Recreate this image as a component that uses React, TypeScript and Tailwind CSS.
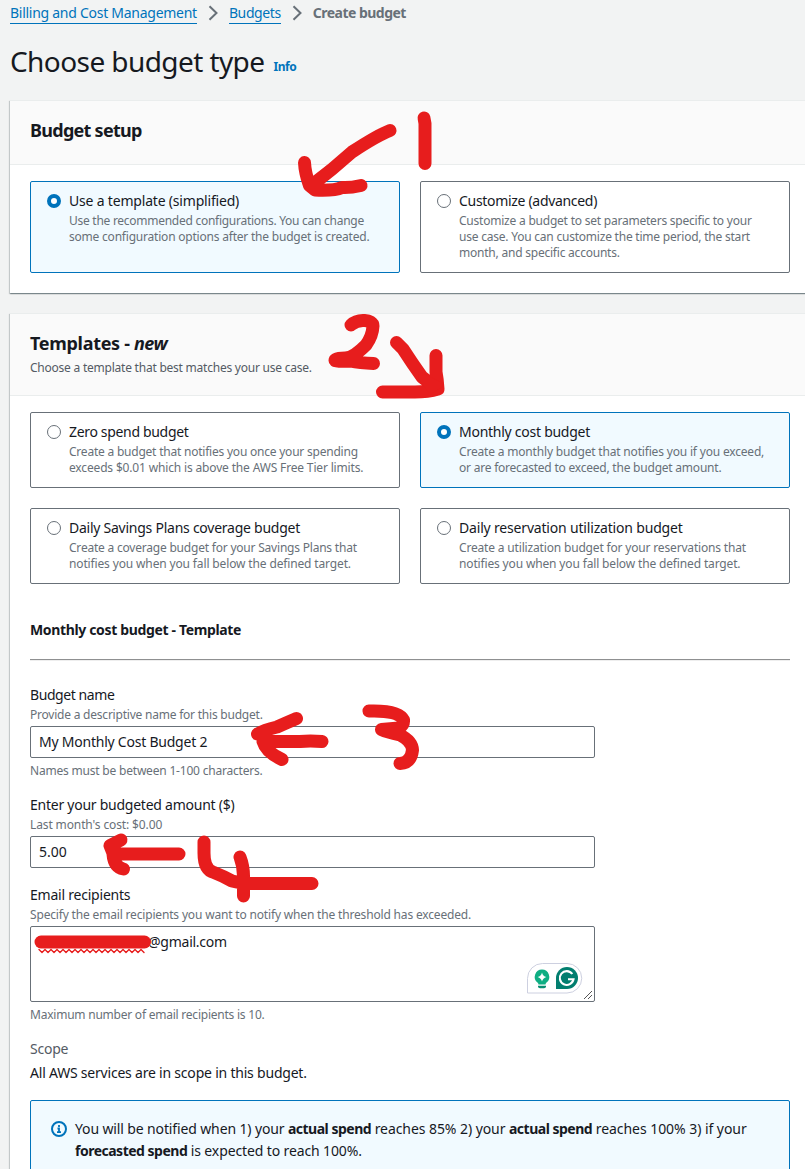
import React from 'react';

type TileProps = {
  title: string;
  titleClass: string;
  lines: { text: string; cls: string }[];
  selected?: boolean;
  tall?: boolean;
};

function Tile({ title, titleClass, lines, selected, tall }: TileProps) {
  return (
    <label
      className={`flex w-[370px] gap-2 rounded-[2px] border px-4 pt-2 ${tall ? 'h-[92px]' : 'h-[76px]'} ${
        selected ? 'border-[#0073bb] bg-[#f1faff]' : 'border-[#687078] bg-white'
      }`}
    >
      <span
        className={`mt-1 size-3.5 shrink-0 rounded-full bg-white ${
          selected ? 'border-4 border-[#0073bb]' : 'border border-[#687078]'
        }`}
      />
      <span className="block whitespace-nowrap">
        <span className={`mb-px block text-[14px] leading-[22px] ${titleClass}`}>{title}</span>
        {lines.map((l) => (
          <span key={l.text} className={`block text-[12px] leading-4 text-[#687078] ${l.cls}`}>
            {l.text}
          </span>
        ))}
      </span>
    </label>
  );
}

function Chevron() {
  return (
    <svg className="mx-[11px] h-4 w-[10px]" viewBox="0 0 10 16" fill="none" stroke="#687078" strokeWidth="2">
      <path d="M1.500 1.200 L8.500 8 L1.500 14.800" />
    </svg>
  );
}

const card =
  'w-[800px] border-t border-[#eaeded] bg-white shadow-[0_1px_1px_0_rgba(0,28,36,0.3),1px_1px_1px_0_rgba(0,28,36,0.15),-1px_1px_1px_0_rgba(0,28,36,0.15)]';
const hint = 'h-4 pt-px text-[12px] leading-4 text-[#687078]';
const field = 'mt-1 flex h-8 w-[565px] items-center rounded-[2px] border border-[#687078] bg-white px-2';

function AssistantBadge() {
  return (
    <svg className="absolute right-[11px] bottom-[7px]" width="56" height="31" viewBox="0 0 56 31">
      <path
        d="M15.5 .5 H40 A14.750 14.750 0 0 1 40 30 H.5 V15.5 A15 15 0 0 1 15.5 .5Z"
        fill="#fff"
        stroke="#cdd0e0"
      />
      <path
        d="M15 6.5 A7.3 7.3 0 0 1 19.5 19.5 Q18.5 20.5 18.5 21.5 H11.5 Q11.5 20.5 10.5 19.5 A7.3 7.3 0 0 1 15 6.5Z"
        fill="#0fae83"
      />
      <path d="M15 9.4 Q15.8 13 19.4 14 Q15.8 15 15 18.6 Q14.2 15 10.6 14 Q14.2 13 15 9.4Z" fill="#fff" />
      <path d="M11 22.7 H19 V23.5 Q19 25.3 17 25.3 H13 Q11 25.3 11 23.5Z" fill="#0a8f72" />
      <path d="M40 4 A11 11 0 1 1 40 26 H29 V15 A11 11 0 0 1 40 4Z" fill="#027e6f" />
      <path
        d="M45.300 11 A6.900 6.900 0 1 0 46.500 16.300 H41"
        fill="none"
        stroke="#fff"
        strokeWidth="2.1"
      />
    </svg>
  );
}

function Annotations() {
  const zigzag = Array.from({ length: 18 }, (_, i) => `${39 + i * 6},949.5 ${42 + i * 6},952.5`).join(' ');
  return (
    <svg
      className="pointer-events-none absolute top-0 left-0"
      width="805"
      height="1169"
      viewBox="0 0 805 1169"
      fill="none"
      stroke="#e71d1d"
      strokeWidth="13"
      strokeLinecap="round"
      strokeLinejoin="round"
    >
      <path d="M390 130.500 Q378 135 352 152 Q332 170 312 185 M304.500 162.500 Q305 173 309.500 185.500 L315 190 Q334 191 342 187.500 Q350 188 361 185.500" />
      <path d="M424 118 Q425.500 123 425 130 V163.500" />
      <path d="M351 325 C358 318 373 319.500 373 326 Q372.500 336 366 345 Q353 358 345 358 Q335 358 335 360.500 Q337 362 350 361 Q360 363 373.500 363.500" />
      <path d="M396.500 342.500 L403 349 Q412 363 422 377 L435 387 M436 355.500 V372 Q437.500 380 438 389 Q428 392 415 392 H382.500" />
      <path d="M422 377 L431 389 L438 385Z" fill="#e71d1d" strokeWidth="8" />
      <path d="M296.500 718.500 Q286 723 277 727 Q264 730 257.500 734 M322 741.500 Q310 740.500 300 741.500 H263 Q266 752 282 759.500" />
      <path d="M369 711 Q399 710 403.500 720 Q404 725 399 728 L381.500 729.500 Q387 732 400 735 Q412 741 412.500 750 Q411 763 400 763.500" />
      <path d="M121 840 L110 845.500 L113 853 M179 854 H113 Q114 867 123.500 869" />
      <path d="M204 842 V853 Q204 870 214 872.500 Q223 876 232 881 Q244 884 260 883.500 H312 M240 857 Q243.500 866 243.500 876 V896" />
      <path d="M41 942 H144.500" />
      <polyline points={zigzag} strokeWidth="1.4" />
    </svg>
  );
}

export default function App() {
  return (
    <div className="relative h-[1169px] w-[805px] overflow-hidden bg-[#f2f3f3] pl-[10px] font-['Noto_Sans',sans-serif] text-[14px] leading-[22px] whitespace-nowrap text-[#16191f]">
      <nav className="flex h-[26px] items-center">
        <a className="h-[22px] border-b border-[#0073bb] leading-[21px] text-[#0073bb] tracking-[-0.27px]">
          Billing and Cost Management
        </a>
        <Chevron />
        <a className="h-[22px] border-b border-[#0073bb] leading-[21px] text-[#0073bb] tracking-[-0.38px]">Budgets</a>
        <Chevron />
        <span className="font-bold text-[#687078] tracking-[-0.53px]">Create budget</span>
      </nav>
      <header className="mt-[17px] flex h-9 items-baseline">
        <h1 className="text-[28px] leading-9 tracking-[-0.58px]">Choose budget type</h1>
        <a className="ml-[9px] text-[12px] leading-4 font-bold text-[#0073bb] tracking-[-0.45px]">
          <span className="block -translate-y-px">Info</span>
        </a>
      </header>

      <section className={`${card} mt-[21px] h-[193px]`}>
        <div className="h-16 border-b border-[#eaeded] bg-[#fafafa] px-5 pt-[18px]">
          <h2 className="text-[18px] leading-[22px] font-bold tracking-[-0.72px]">Budget setup</h2>
        </div>
        <div className="flex gap-5 px-5 pt-4">
          <Tile
            selected
            tall
            title="Use a template (simplified)"
            titleClass="tracking-[-0.19px]"
            lines={[
              { text: 'Use the recommended configurations. You can change', cls: 'tracking-[-0.27px]' },
              { text: 'some configuration options after the budget is created.', cls: 'tracking-[-0.21px]' },
            ]}
          />
          <Tile
            tall
            title="Customize (advanced)"
            titleClass="tracking-[-0.31px]"
            lines={[
              { text: 'Customize a budget to set parameters specific to your', cls: 'tracking-[-0.22px]' },
              { text: 'use case. You can customize the time period, the start', cls: 'tracking-[-0.22px]' },
              { text: 'month, and specific accounts.', cls: 'tracking-[-0.22px]' },
            ]}
          />
        </div>
      </section>

      <section className={`${card} mt-5 h-[900px]`}>
        <div className="h-[82px] border-b border-[#eaeded] bg-[#fafafa] px-5 pt-[18px]">
          <h2 className="text-[18px] leading-[22px] font-bold tracking-[-0.3px]">
            Templates - <em className="tracking-[-0.57px]">new</em>
          </h2>
          <p className="mt-1.5 text-[12px] leading-4 text-[#545b64] tracking-[-0.23px]">
            Choose a template that best matches your use case.
          </p>
        </div>
        <div className="px-5 pt-4">
          <div className="grid grid-cols-2 gap-5">
            <Tile
              title="Zero spend budget"
              titleClass="tracking-[-0.33px]"
              lines={[
                { text: 'Create a budget that notifies you once your spending', cls: 'tracking-[-0.22px]' },
                { text: 'exceeds $0.01 which is above the AWS Free Tier limits.', cls: 'tracking-[-0.16px]' },
              ]}
            />
            <Tile
              selected
              title="Monthly cost budget"
              titleClass="tracking-[-0.26px]"
              lines={[
                { text: 'Create a monthly budget that notifies you if you exceed,', cls: 'tracking-[-0.18px]' },
                { text: 'or are forecasted to exceed, the budget amount.', cls: 'tracking-[-0.22px]' },
              ]}
            />
            <Tile
              title="Daily Savings Plans coverage budget"
              titleClass="tracking-[-0.25px]"
              lines={[
                { text: 'Create a coverage budget for your Savings Plans that', cls: 'tracking-[-0.21px]' },
                { text: 'notifies you when you fall below the defined target.', cls: 'tracking-[-0.14px]' },
              ]}
            />
            <Tile
              title="Daily reservation utilization budget"
              titleClass="tracking-[-0.18px]"
              lines={[
                { text: 'Create a utilization budget for your reservations that', cls: 'tracking-[-0.17px]' },
                { text: 'notifies you when you fall below the defined target.', cls: 'tracking-[-0.15px]' },
              ]}
            />
          </div>

          <h3 className="mt-[35px] font-bold tracking-[-0.35px]">Monthly cost budget - Template</h3>
          <hr className="mt-[18px] h-0.5 border-t border-b border-t-[#8f9091] border-b-[#eeeeee]" />

          <div className="mt-[23px]">
            <div className="tracking-[-0.42px]">Budget name</div>
            <div className={`${hint} tracking-[-0.22px]`}>Provide a descriptive name for this budget.</div>
            <div className={`${field} tracking-[-0.23px]`}>My Monthly Cost Budget 2</div>
            <div className={`${hint} mt-1 tracking-[-0.2px]`}>Names must be between 1-100 characters.</div>
          </div>

          <div className="mt-4">
            <div className="tracking-[-0.25px]">Enter your budgeted amount ($)</div>
            <div className={`${hint} tracking-[-0.12px]`}>Last month's cost: $0.00</div>
            <div className={field}>5.00</div>
          </div>

          <div className="mt-4">
            <div className="tracking-[-0.22px]">Email recipients</div>
            <div className={`${hint} tracking-[-0.17px]`}>
              Specify the email recipients you want to notify when the threshold has exceeded.
            </div>
            <div className="relative mt-1 h-[76px] w-[565px] rounded-[2px] border border-[#687078] pt-1 pl-[117px] tracking-[-0.25px]">
              @gmail.com
              <AssistantBadge />
              <svg className="absolute right-0.5 bottom-0.5" width="8" height="8" viewBox="0 0 8 8" stroke="#555" strokeWidth="1">
                <path d="M0 8 L8 0 M4 8 L8 4" />
              </svg>
            </div>
            <div className={`${hint} mt-1 tracking-[-0.23px]`}>Maximum number of email recipients is 10.</div>
          </div>

          <div className="mt-4 text-[#545b64] tracking-[-0.25px]">Scope</div>
          <div className="mt-0.5 tracking-[-0.21px]">All AWS services are in scope in this budget.</div>

          <div className="mt-4 flex h-[80px] w-[760px] gap-2 rounded-t-[2px] border border-[#0073bb] bg-[#f1faff] px-5 pt-[17px]">
            <svg className="mt-[3px] size-4 shrink-0" viewBox="0 0 16 16" fill="none" stroke="#0073bb" strokeWidth="2">
              <circle cx="8" cy="8" r="7" />
              <path d="M8 4 V6 M6.500 7.500 H8 V11 M6 11.200 H10" strokeWidth="1.8" />
            </svg>
            <div>
              <div>
                <span className="tracking-[-0.13px]">You will be notified when 1) your </span>
                <b className="tracking-[-0.5px]">actual spend</b>
                <span className="tracking-[-0.07px]"> reaches 85% 2) your </span>
                <b className="tracking-[-0.5px]">actual spend</b>
                <span className="tracking-[-0.05px]"> reaches 100% 3) if your</span>
              </div>
              <div className="tracking-[-0.12px]">
                <b className="tracking-[-0.5px]">forecasted spend</b> is expected to reach 100%.
              </div>
            </div>
          </div>
        </div>
      </section>
      <Annotations />
    </div>
  );
}
